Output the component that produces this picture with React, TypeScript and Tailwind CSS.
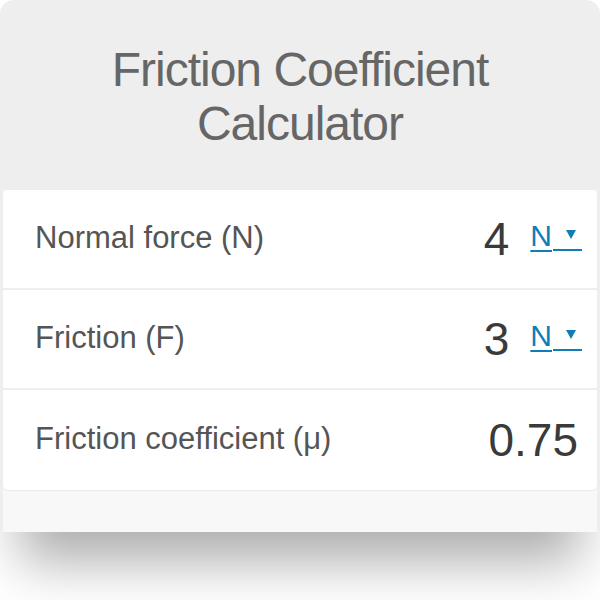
import React from "react";

function Unit() {
  return (
    <span className="flex items-end text-[30px] leading-none text-[#0f7db6] ml-[21px] mb-[7px]">
      <span className="underline decoration-2 underline-offset-[4px]">N</span>
      <span className="ml-[1px] w-[29px] h-[31px] border-b-2 border-[#0f7db6] flex items-center justify-end pr-[6px]">
        <svg width="10" height="9" viewBox="0 0 10 9">
          <polygon points="0,0 10,0 5,9" fill="#0f7db6" />
        </svg>
      </span>
    </span>
  );
}

function Row({ label, value, unit, last }: { label: string; value: string; unit?: boolean; last?: boolean }) {
  return (
    <div
      className={
        "h-[100px] flex items-center justify-between pl-[32px] pr-[15px] " +
        (last ? "" : "border-b-2 border-[#eeeeee]")
      }
    >
      <span className="text-[31px] text-[#555555] leading-none pb-[4px]">{label}</span>
      <span className="flex items-center">
        <span className={"text-[46px] text-[#3a3a3a] leading-none " + (unit ? "" : "pr-[4px]")}>{value}</span>
        {unit ? <Unit /> : null}
      </span>
    </div>
  );
}

export default function App() {
  return (
    <div className="w-[600px] h-[600px] bg-white overflow-hidden" style={{ fontFamily: '"Liberation Sans", Arial, sans-serif' }}>
      <div className="h-[532px] rounded-t-[14px] bg-[#eeeeee] flex flex-col px-[3px] shadow-[0_50px_50px_-20px_rgba(0,0,0,0.32)]">
        <div className="h-[190px] flex items-start justify-center pt-[43px]">
          <h1 className="text-center text-[48px] leading-[54px] tracking-[-1px] text-[#666666] font-normal">
            Friction Coefficient
            <br />
            Calculator
          </h1>
        </div>
        <div className="flex-1 bg-[#f8f8f8]">
          <div className="bg-white rounded-[5px] shadow-[0_1px_1px_rgba(0,0,0,0.06)]">
            <Row label="Normal force (N)" value="4" unit />
            <Row label="Friction (F)" value="3" unit />
            <Row label="Friction coefficient (μ)" value="0.75" last />
          </div>
        </div>
      </div>
    </div>
  );
}
